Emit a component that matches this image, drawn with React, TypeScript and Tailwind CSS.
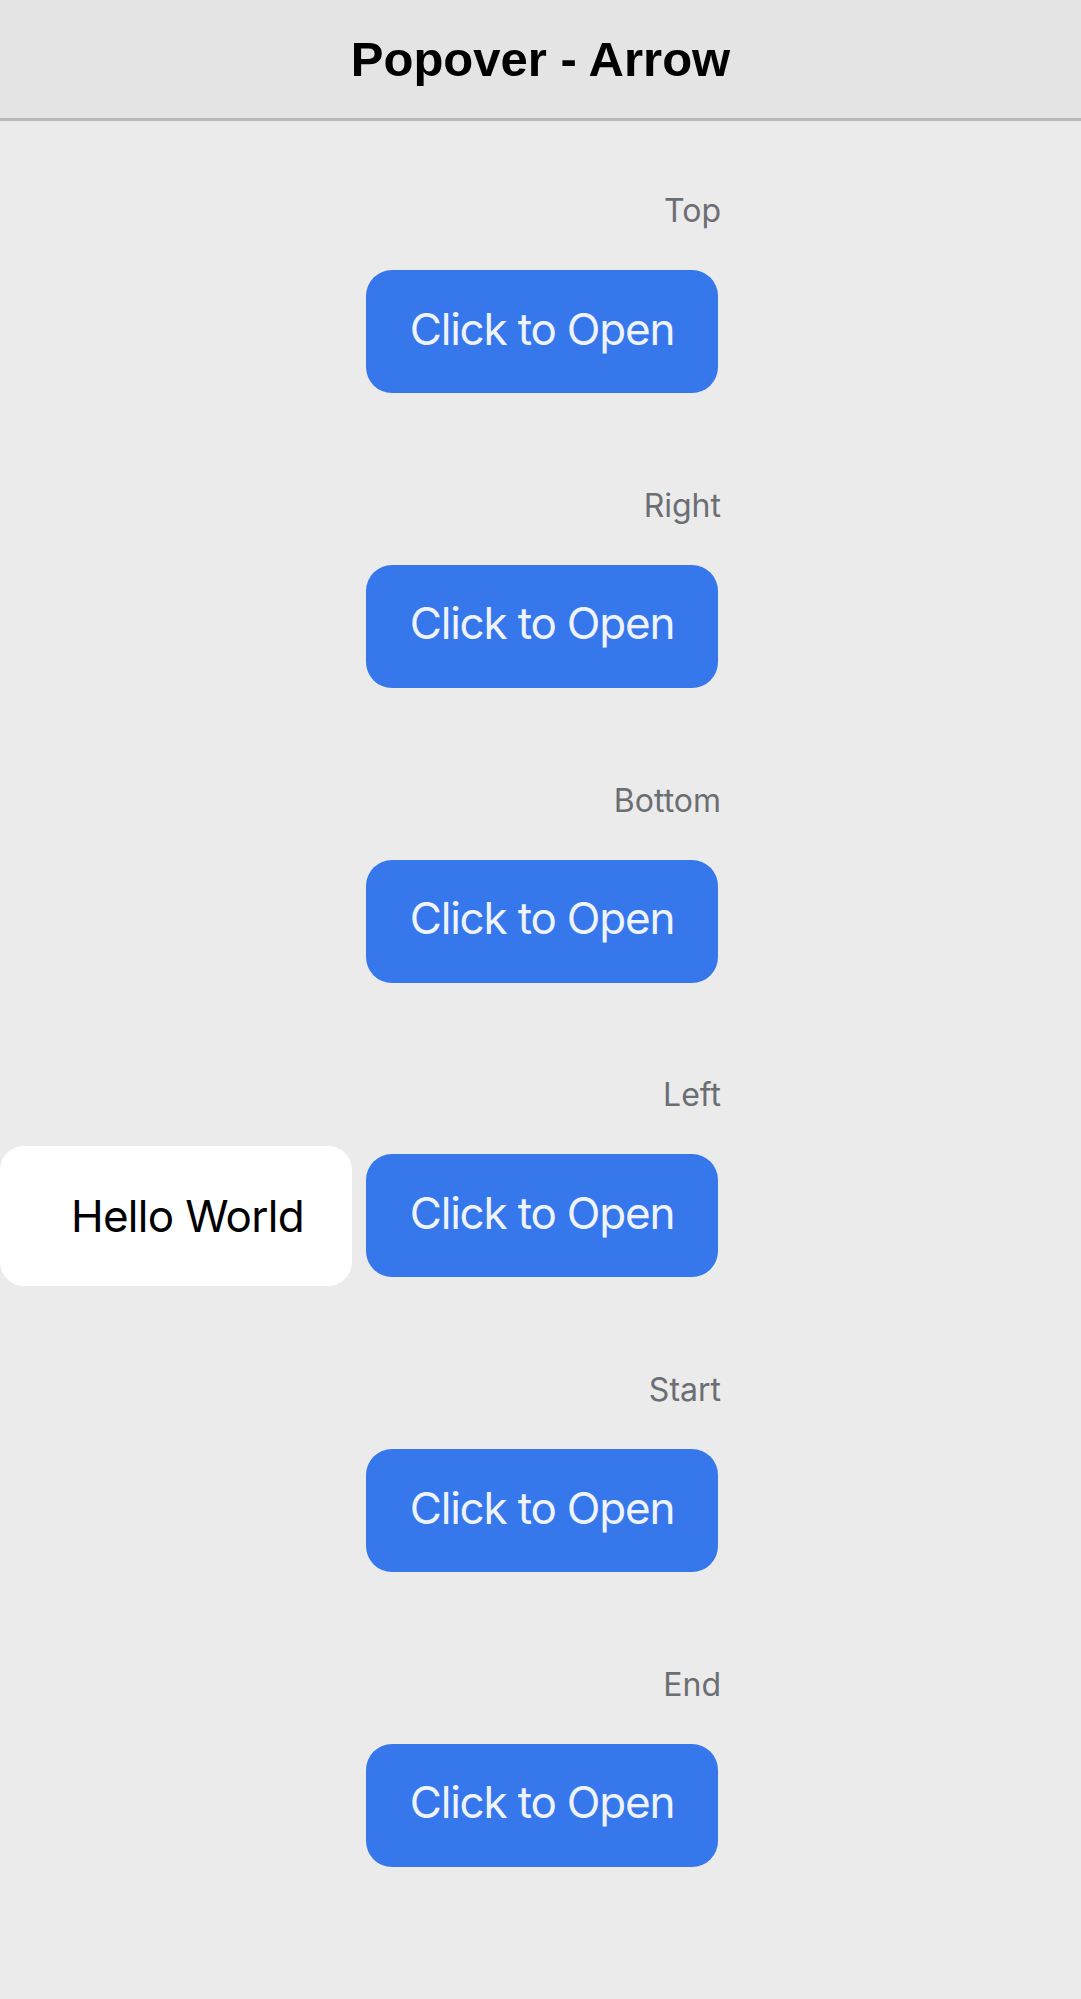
const placements = ["Top", "Right", "Bottom", "Left", "Start", "End"];

function PopoverRow({ label, open }: { label: string; open: boolean }) {
  return (
    <div className="flex w-[352px] flex-col">
      <div className="-mr-[3px] h-[40px] text-right text-[32px] leading-[40px] text-[#6b6e73]">{label}</div>
      <div className="relative mt-[39px]">
        {open && (
          <div className="absolute right-[calc(100%+14px)] top-[-8px] flex h-[140px] w-[352px] items-center justify-end rounded-[24px] bg-white pr-[48px] text-[44px] tracking-[-0.7px] text-black">
            Hello World
          </div>
        )}
        <button className="flex h-[123px] w-[352px] items-center justify-center rounded-[26px] bg-[#3678ec] pb-[6px] text-[44px] tracking-[-1.2px] text-[#eef3fd]">
          Click to Open
        </button>
      </div>
    </div>
  );
}

export default function App() {
  return (
    <div className="min-h-screen bg-[#ebebeb] font-['Inter',sans-serif]">
      <header className="flex h-[121px] items-center justify-center border-b-[3px] border-[#bababa] bg-[#e4e4e4]">
        <h1 className="font-['Liberation_Sans',Arial,sans-serif] text-[49px] font-bold leading-none text-black">
          Popover - Arrow
        </h1>
      </header>
      <main className="flex flex-col items-center gap-[92.8px] pl-[3px] pt-[70px]">
        {placements.map((p) => (
          <PopoverRow key={p} label={p} open={p === "Left"} />
        ))}
      </main>
    </div>
  );
}
